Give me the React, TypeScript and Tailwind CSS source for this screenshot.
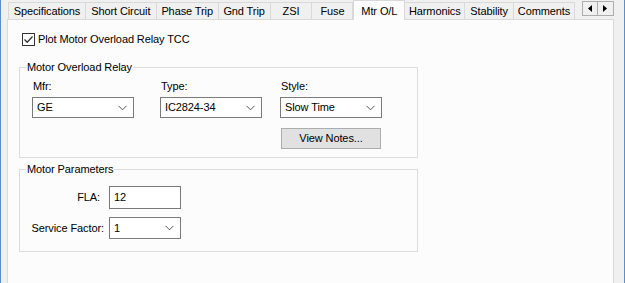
import React from "react";

const tabs = [
  { name: "Specifications", w: 78 },
  { name: "Short Circuit", w: 71 },
  { name: "Phase Trip", w: 62 },
  { name: "Gnd Trip", w: 52 },
  { name: "ZSI", w: 42 },
  { name: "Fuse", w: 41 },
  { name: "Mtr O/L", w: 52, sel: true },
  { name: "Harmonics", w: 60 },
  { name: "Stability", w: 49 },
  { name: "Comments", w: 61 },
];

function Chevron() {
  return (
    <svg width="9" height="6" viewBox="0 0 9 6" className="shrink-0">
      <path d="M0.5 0.8 L4.5 4.8 L8.5 0.8" fill="none" stroke="#555" strokeWidth="1" />
    </svg>
  );
}

function Combo({ value, w, h = 21 }: { value: string; w: number; h?: number }) {
  return (
    <div
      className="flex items-center border border-[#7a7a7a] bg-white pl-[4px] pr-[6px]"
      style={{ width: w, height: h }}
    >
      <span className="flex-1 leading-none">{value}</span>
      <Chevron />
    </div>
  );
}

export default function App() {
  return (
    <div className="w-[625px] h-[283px] overflow-hidden bg-[#f0f0f0] flex font-['Liberation_Sans',Arial,sans-serif] text-[11px] tracking-[-0.1px] text-black">
      <div className="w-px bg-[#5b8fcb]" />
      <div className="w-[6px]" />
      <div className="w-[607px] flex flex-col">
        <div className="h-[19px] flex items-end pl-px">
          {tabs.map((t, i) =>
            t.sel ? (
              <div
                key={t.name}
                className="relative z-10 -mb-px h-[20px] bg-[#fcfcfc] border border-b-0 border-[#d9d9d9] flex items-start justify-center pt-[2px]"
                style={{ width: t.w }}
              >
                {t.name}
              </div>
            ) : (
              <div
                key={t.name}
                className={`h-[17px] bg-[#f0f0f0] border-t border-r border-[#d9d9d9] flex items-center justify-center ${i === 0 ? "border-l" : ""}`}
                style={{ width: t.w }}
              >
                {t.name}
              </div>
            )
          )}
          <div className="ml-[7px] mb-[3px] flex">
            <div className="w-[16px] h-[15px] border border-[#adadad] bg-[#f0f0f0] flex items-center justify-center">
              <svg width="4" height="7" viewBox="0 0 4 7"><path d="M4 0 L0 3.5 L4 7 Z" fill="#000" /></svg>
            </div>
            <div className="w-[16px] h-[15px] border border-l-0 border-[#adadad] bg-[#f0f0f0] flex items-center justify-center">
              <svg width="4" height="7" viewBox="0 0 4 7"><path d="M0 0 L4 3.5 L0 7 Z" fill="#000" /></svg>
            </div>
          </div>
        </div>
        <div className="flex-1 border border-b-0 border-[#d9d9d9] bg-[#fcfcfc] flex flex-col pl-[11px]">
          <div className="mt-[13px] ml-[3px] flex items-center gap-[3px] h-[13px]">
            <div className="w-[13px] h-[13px] border border-[#333] bg-white flex items-center justify-center">
              <svg width="11" height="11" viewBox="0 0 11 11">
                <path d="M1.5 5.5 L4.2 8.3 L9.5 2.5" fill="none" stroke="#333" strokeWidth="1.3" />
              </svg>
            </div>
            <span>Plot Motor Overload Relay TCC</span>
          </div>

          <div className="relative mt-[21px] w-[399px] h-[91px] border border-[#dcdcdc] flex flex-col pl-[12px]">
            <span className="absolute -top-[8px] left-[6px] px-px bg-[#fcfcfc] leading-[14px]">Motor Overload Relay</span>
            <div className="mt-[12px] flex">
              <div className="flex flex-col gap-[4px]">
                <span className="leading-[13px] pl-px">Mfr:</span>
                <Combo value="GE" w={102} />
              </div>
              <div className="ml-[26px] flex flex-col gap-[4px]">
                <span className="leading-[13px] pl-px">Type:</span>
                <Combo value="IC2824-34" w={102} />
              </div>
              <div className="ml-[18px] flex flex-col gap-[4px]">
                <span className="leading-[13px] pl-px">Style:</span>
                <Combo value="Slow Time" w={102} />
                <div className="mt-[6px] ml-px w-[100px] h-[21px] border border-[#adadad] bg-[#e1e1e1] flex items-center justify-center">
                  View Notes...
                </div>
              </div>
            </div>
          </div>

          <div className="relative mt-[11px] w-[399px] h-[83px] border border-[#dcdcdc] pl-[8px] pt-[16px]">
            <span className="absolute -top-[8px] left-[6px] px-px bg-[#fcfcfc] leading-[14px]">Motor Parameters</span>
            <div className="grid grid-cols-[76px_72px] gap-x-[5px] gap-y-[8px] items-center">
              <span className="text-right pr-[4px] whitespace-nowrap">FLA:</span>
              <div className="h-[23px] border border-[#7a7a7a] bg-white flex items-center pl-[4px]">12</div>
              <span className="flex justify-end whitespace-nowrap">Service Factor:</span>
              <Combo value="1" w={72} h={22} />
            </div>
          </div>
        </div>
      </div>
      <div className="w-[10px]" />
      <div className="w-px bg-[#5b8fcb]" />
    </div>
  );
}
